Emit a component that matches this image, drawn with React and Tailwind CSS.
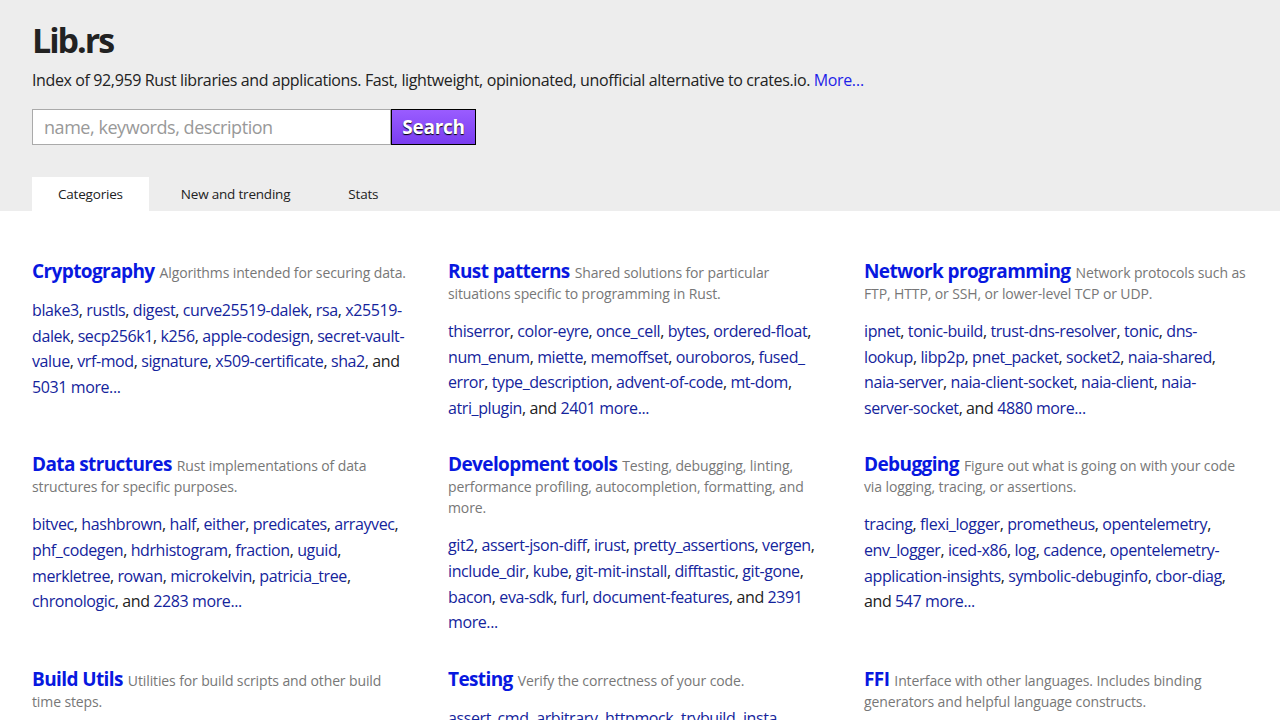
import React from "react";

const cats = [
  {
    name: "Cryptography",
    desc: ["Algorithms intended for securing data."],
    lines: [
      [["blake3", "rustls", "digest", "curve25519-dalek", "rsa", "x25519-"], ""],
      [["dalek", "secp256k1", "k256", "apple-codesign", "secret-vault-"], ""],
      [["value", "vrf-mod", "signature", "x509-certificate", "sha2"], "and"],
      [[], "", "5031 more..."],
    ],
  },
  {
    name: "Rust patterns",
    desc: ["Shared solutions for particular", "situations specific to programming in Rust."],
    lines: [
      [["thiserror", "color-eyre", "once_cell", "bytes", "ordered-float"], ","],
      [["num_enum", "miette", "memoffset", "ouroboros", "fused_"], ""],
      [["error", "type_description", "advent-of-code", "mt-dom"], ","],
      [["atri_plugin"], "and", "2401 more..."],
    ],
  },
  {
    name: "Network programming",
    desc: ["Network protocols such as", "FTP, HTTP, or SSH, or lower-level TCP or UDP."],
    lines: [
      [["ipnet", "tonic-build", "trust-dns-resolver", "tonic", "dns-"], ""],
      [["lookup", "libp2p", "pnet_packet", "socket2", "naia-shared"], ","],
      [["naia-server", "naia-client-socket", "naia-client", "naia-"], ""],
      [["server-socket"], "and", "4880 more..."],
    ],
  },
  {
    name: "Data structures",
    desc: ["Rust implementations of data", "structures for specific purposes."],
    lines: [
      [["bitvec", "hashbrown", "half", "either", "predicates", "arrayvec"], ","],
      [["phf_codegen", "hdrhistogram", "fraction", "uguid"], ","],
      [["merkletree", "rowan", "microkelvin", "patricia_tree"], ","],
      [["chronologic"], "and", "2283 more..."],
    ],
  },
  {
    name: "Development tools",
    desc: ["Testing, debugging, linting,", "performance profiling, autocompletion, formatting, and", "more."],
    lines: [
      [["git2", "assert-json-diff", "irust", "pretty_assertions", "vergen"], ","],
      [["include_dir", "kube", "git-mit-install", "difftastic", "git-gone"], ","],
      [["bacon", "eva-sdk", "furl", "document-features"], "and", "2391"],
      [[], "", "more..."],
    ],
  },
  {
    name: "Debugging",
    desc: ["Figure out what is going on with your code", "via logging, tracing, or assertions."],
    lines: [
      [["tracing", "flexi_logger", "prometheus", "opentelemetry"], ","],
      [["env_logger", "iced-x86", "log", "cadence", "opentelemetry-"], ""],
      [["application-insights", "symbolic-debuginfo", "cbor-diag"], ","],
      [[], "and", "547 more..."],
    ],
  },
  {
    name: "Build Utils",
    desc: ["Utilities for build scripts and other build", "time steps."],
    lines: [
      [["cc", "pkg-config", "cmake", "bindgen", "built", "vergen"], ","],
      [["shadow-rs", "cargo-emit", "winres", "embed-resource"], ","],
      [["autocfg", "rustc_version"], "and", "1620 more..."],
    ],
  },
  {
    name: "Testing",
    desc: ["Verify the correctness of your code."],
    lines: [
      [["assert_cmd", "arbitrary", "httpmock", "trybuild", "insta"], ","],
      [["proptest", "mockall", "criterion", "rstest", "wiremock"], ","],
      [["quickcheck", "test-case"], "and", "1812 more..."],
    ],
  },
  {
    name: "FFI",
    desc: ["Interface with other languages. Includes binding", "generators and helpful language constructs."],
    lines: [
      [["libc", "bindgen", "cxx", "pyo3", "jni", "napi", "cbindgen"], ","],
      [["libloading", "safer-ffi", "uniffi", "wasm-bindgen"], ","],
      [["neon"], "and", "3240 more..."],
    ],
  },
];

function Line({ line }) {
  const [links, tail, more] = line;
  const out = [];
  links.forEach((l, i) => {
    const last = i === links.length - 1;
    out.push(
      <a key={"a" + i} className="text-[#14249c]">
        {l}
      </a>
    );
    if (!last) out.push(<span key={"s" + i}>, </span>);
  });
  if (tail === ",") out.push(<span key="t">,</span>);
  if (tail === "and") {
    out.push(<span key="t">{links.length ? ", and " : "and "}</span>);
  }
  if (more) out.push(<a key="m" className="text-[#14249c]">{more}</a>);
  return <div className="whitespace-nowrap">{out}</div>;
}

function Category({ c }) {
  return (
    <div>
      <div className="whitespace-nowrap text-[14px] leading-[21px] tracking-[-0.12px] text-[#777]">
        <a className="mr-[5px] text-[19px] leading-[22px] font-bold text-[#0818e0] tracking-[-0.6px]">{c.name}</a>
        {c.desc.map((d, i) => (
          <React.Fragment key={i}>
            {i > 0 && <br />}
            {d}
          </React.Fragment>
        ))}
      </div>
      <div className="mt-[15px] text-[16px] leading-[25.6px] tracking-[-0.4px] text-[#222]">
        {c.lines.map((l, i) => (
          <Line key={i} line={l} />
        ))}
      </div>
    </div>
  );
}

export default function App() {
  return (
    <div className="min-h-screen bg-white text-[#222]" style={{ fontFamily: "'Open Sans', 'Noto Sans', sans-serif" }}>
      <header className="bg-[#ededed] px-8 pt-[18px]">
        <h1 className="text-[34px] leading-[44px] font-bold text-[#222] tracking-[-2px]">Lib.rs</h1>
        <p className="mt-[6px] text-[16px] leading-[24px] tracking-[-0.38px] text-[#222]">
          Index of 92,959 Rust libraries and applications. Fast, lightweight, opinionated, unofficial alternative to crates.io.{" "}
          <a className="text-[#1f1fe8]">More…</a>
        </p>
        <form className="mt-[17px] flex">
          <input
            className="h-[36px] w-[359px] border border-[#aaa] bg-white px-[11px] text-[18px] tracking-[-0.45px] outline-none placeholder:text-[#999]"
            placeholder="name, keywords, description"
          />
          <button
            type="button"
            className="h-[36px] w-[85px] border border-black bg-gradient-to-b from-[#9a5cff] to-[#7a3cf0] text-[19px] font-bold text-white tracking-[-0.3px] [text-shadow:0_1px_1px_#000]"
          >
            Search
          </button>
        </form>
        <nav className="mt-[32px] flex gap-[6px] text-[13.5px] leading-[34px] tracking-[-0.2px] text-[#222]">
          <span className="bg-white px-[26px]">Categories</span>
          <span className="px-[26px]">New and trending</span>
          <span className="px-[26px]">Stats</span>
        </nav>
      </header>
      <main className="grid grid-cols-3 gap-x-8 gap-y-8 px-8 pt-[49px]">
        {cats.map((c) => (
          <Category key={c.name} c={c} />
        ))}
      </main>
    </div>
  );
}
